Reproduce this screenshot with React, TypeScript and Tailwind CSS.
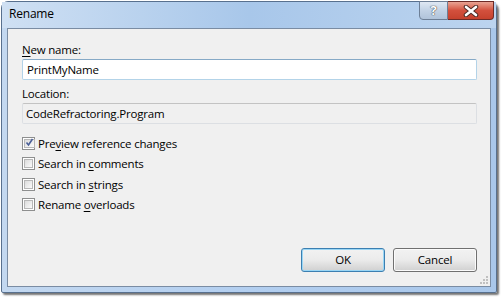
import React from "react";

const font = { fontFamily: '"Segoe UI", "Open Sans", "Liberation Sans", sans-serif' };

function CheckBox({ checked }: { checked?: boolean }) {
  return (
    <span className="w-[13px] h-[13px] border border-[#8e8f8f] bg-white p-[1px] flex shrink-0">
      <span className="flex-1 border border-[#b7b7b7] bg-gradient-to-br from-[#dcdcdc] to-[#fbfbfb] flex items-center justify-center">
        {checked && (
          <svg width="9" height="9" viewBox="0 0 9 9" className="-mt-[1px]">
            <path d="M1.5 4.5 L3.5 7 L7.5 1" stroke="#4a5f97" strokeWidth="1.6" fill="none" />
          </svg>
        )}
      </span>
    </span>
  );
}

function CheckRow({ checked, children }: { checked?: boolean; children: React.ReactNode }) {
  return (
    <div className="h-[20.5px] flex items-center gap-[3px]">
      <CheckBox checked={checked} />
      <span>{children}</span>
    </div>
  );
}

function Button({ label, focused }: { label: string; focused?: boolean }) {
  return (
    <div
      className={`w-[84px] h-[24px] rounded-[3px] border flex items-center justify-center ${
        focused ? "border-[#3c7fb1] shadow-[inset_0_0_0_1px_#9ad6f5]" : "border-[#707070] shadow-[inset_0_0_0_1px_#fbfbfb]"
      } bg-gradient-to-b from-[#f2f2f2] via-[#ebebeb] to-[#d0d0d0]`}
    >
      {label}
    </div>
  );
}

export default function App() {
  return (
    <div
      className="w-[504px] h-[298px] bg-white pt-[1px] pl-[1px] text-[11.5px] tracking-[-0.2px] text-black"
      style={font}
    >
      <div className="relative w-[496px] h-[292px] rounded-t-[7px] rounded-b-[2px] border border-[#58708e] bg-gradient-to-r from-[#c3d8f0] via-[#b3cff0] to-[#a9c7ea] shadow-[2px_2px_2px_rgba(0,0,0,0.55)] flex flex-col">
        <div className="h-[26px] flex items-center pl-[7px] pb-[3px] bg-gradient-to-r from-[#cfe0f3] via-[#a8c7ea] to-[#bcd4ef] text-[12px]">
          Rename
        </div>
        <div className="absolute top-[-1px] right-[2px] flex">
          <div className="w-[29px] h-[19px] rounded-bl-[4px] border border-[#6d7f96] bg-gradient-to-b from-[#dfe8f3] via-[#c2d2e5] to-[#b0c3da] flex items-center justify-center">
            <span className="text-[13px] font-bold text-white [text-shadow:0_0_1px_#333,0_0_1px_#333]">?</span>
          </div>
          <div className="w-[46px] h-[19px] rounded-br-[4px] border border-l-0 border-[#6e2a26] bg-gradient-to-b from-[#e8a393] via-[#d3503d] to-[#c6412d] flex items-center justify-center">
            <svg width="16" height="12" viewBox="0 0 16 12">
              <path d="M3 2 L13 10 M13 2 L3 10" stroke="#4b2a25" strokeWidth="4.5" strokeLinecap="round" />
              <path d="M3 2 L13 10 M13 2 L3 10" stroke="#ffffff" strokeWidth="2.6" strokeLinecap="round" />
            </svg>
          </div>
        </div>
        <div className="flex-1 mx-[5px] mb-[5px] border border-[#7a8ca3] bg-[#f0f0f0] pl-[14px] pr-[13px] pt-[12px] pb-[14px] flex flex-col">
          <div className="h-[17px] flex items-center">
            <span>
              <span className="underline underline-offset-2">N</span>ew name:
            </span>
          </div>
          <div className="mt-[1px] h-[21px] rounded-[2px] border border-[#b3d3e8] border-t-[#86a9c6] bg-white flex items-center pl-[4px]">
            PrintMyName
          </div>
          <div className="mt-[6px] h-[16px] flex items-center">Location:</div>
          <div className="mt-[1px] h-[21px] rounded-[2px] border border-[#dcdfe3] border-t-[#c3c3c3] bg-[#f0f0f0] flex items-center pl-[3px]">
            CodeRefractoring.Program
          </div>
          <div className="mt-[9px] flex flex-col">
            <CheckRow checked>
              Pre<span className="underline underline-offset-2">v</span>iew reference changes
            </CheckRow>
            <CheckRow>
              Search in <span className="underline underline-offset-2">c</span>omments
            </CheckRow>
            <CheckRow>
              Search in <span className="underline underline-offset-2">s</span>trings
            </CheckRow>
            <CheckRow>
              Rename <span className="underline underline-offset-2">o</span>verloads
            </CheckRow>
          </div>
          <div className="mt-auto flex justify-end gap-[8px]">
            <Button label="OK" focused />
            <Button label="Cancel" />
          </div>
        </div>
        <svg className="absolute right-[8px] bottom-[8px]" width="8" height="8" viewBox="0 0 8 8">
          {[
            [6, 0],
            [6, 3],
            [3, 3],
            [6, 6],
            [3, 6],
            [0, 6],
          ].map(([x, y], i) => (
            <rect key={i} x={x} y={y} width="2" height="2" fill="#c0c0c0" />
          ))}
        </svg>
      </div>
    </div>
  );
}
